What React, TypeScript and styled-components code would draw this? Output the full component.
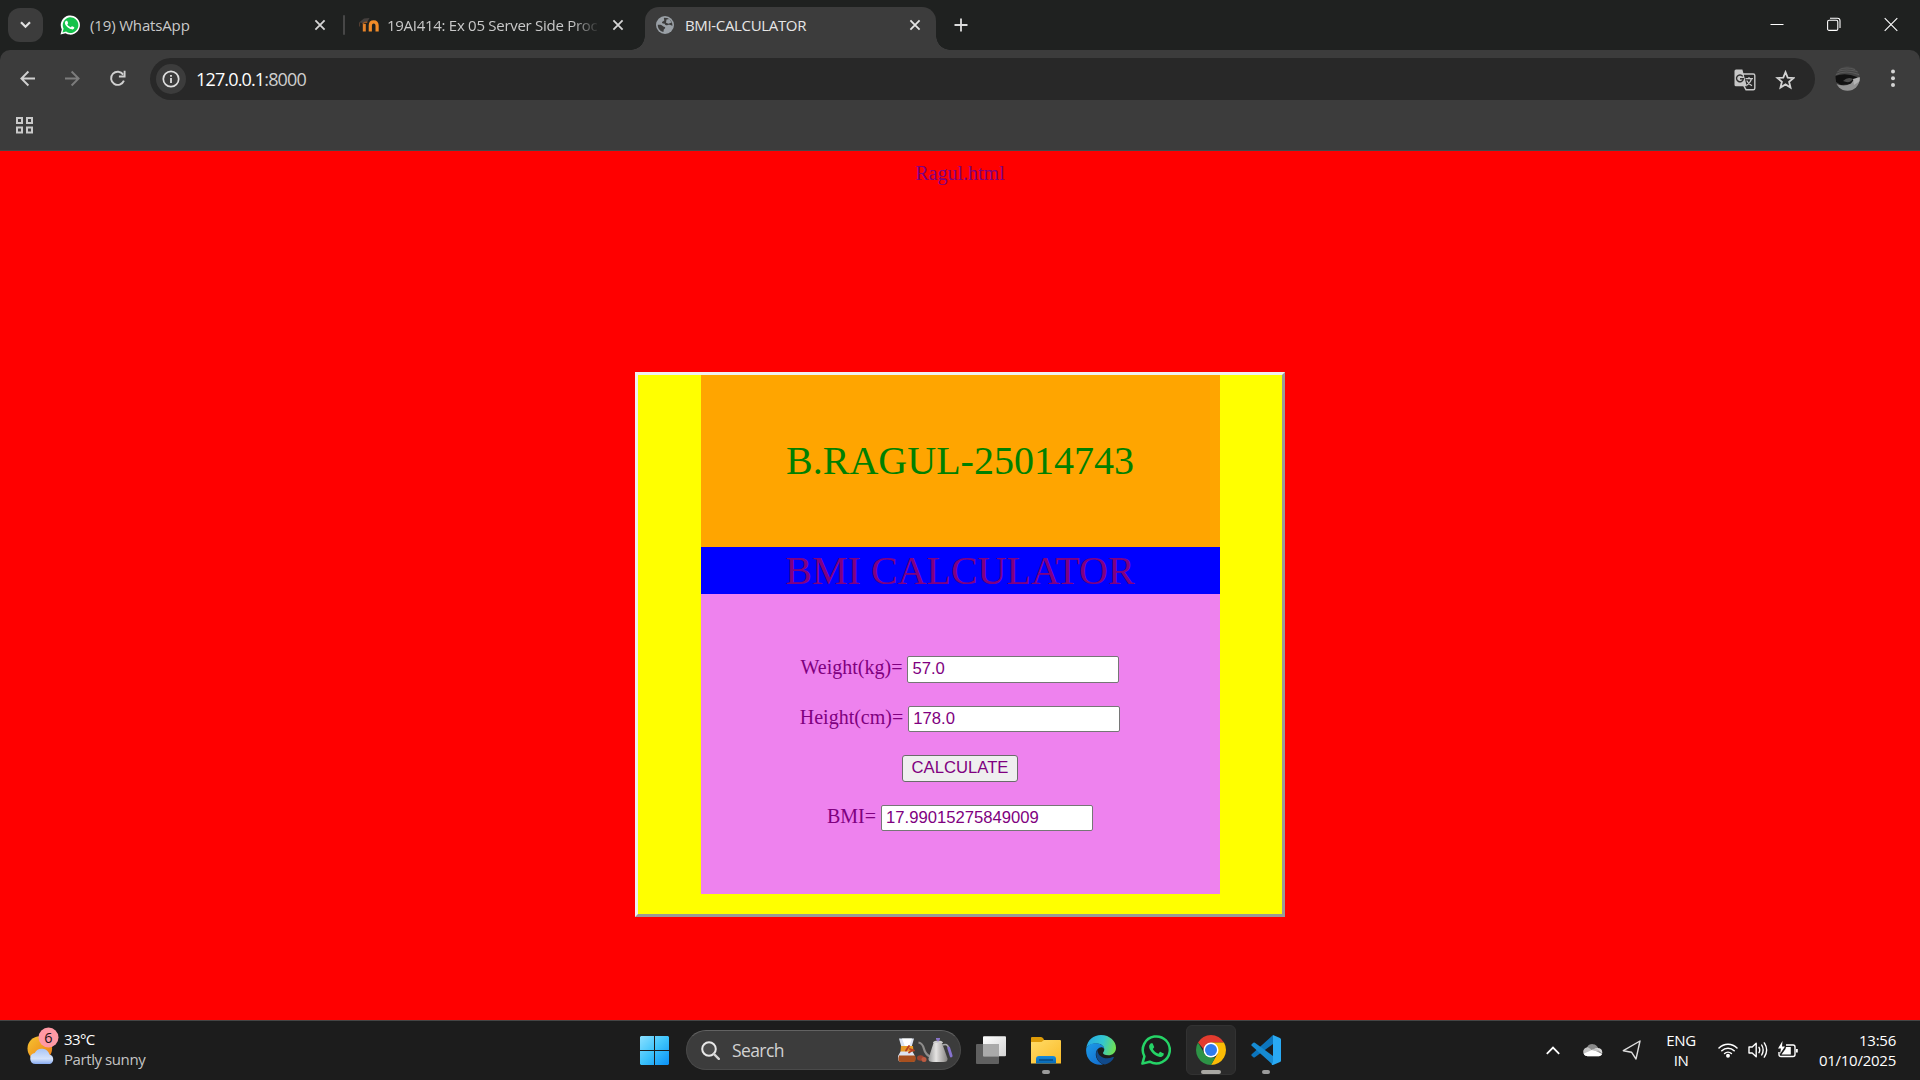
import React from "react";
import styled, { createGlobalStyle } from "styled-components";

const Global = createGlobalStyle`
  html, body { margin: 0; padding: 0; background: #1f2120; overflow: hidden; }
  *, *::before, *::after { box-sizing: border-box; }
  svg { display: block; flex: none; }
`;

const ui = `"Open Sans", "Noto Sans", sans-serif`;
const serif = `"Liberation Serif", "Times New Roman", serif`;
const sans = `"Liberation Sans", Arial, sans-serif`;

const Screen = styled.div`
  width: 1920px;
  height: 1080px;
  display: flex;
  flex-direction: column;
  font-family: ${ui};
`;

const TabStrip = styled.div`
  height: 50px;
  display: flex;
  align-items: flex-start;
  background: #1f2120;
  padding-left: 8px;
`;
const TabSearch = styled.div`
  width: 35px;
  height: 34px;
  margin-top: 8px;
  border-radius: 12px;
  background: #3c3c3c;
  display: grid;
  place-items: center;
`;
const Tab = styled.div<{ $w: number; $pl: number; $pr: number; $active?: boolean }>`
  width: ${(p) => p.$w}px;
  height: 43px;
  margin-top: 7px;
  padding: 0 ${(p) => p.$pr}px 8px ${(p) => p.$pl}px;
  display: flex;
  align-items: center;
  position: relative;
  color: ${(p) => (p.$active ? "#e6e6e6" : "#c9c9c9")};
  background: ${(p) => (p.$active ? "#3c3c3c" : "transparent")};
  border-radius: 14px 14px 0 0;
  ${(p) =>
    p.$active &&
    `
    &::before, &::after {
      content: "";
      position: absolute;
      bottom: 0;
      width: 14px;
      height: 14px;
    }
    &::before { left: -14px; background: radial-gradient(circle at 0 0, transparent 13.5px, #3c3c3c 14px); }
    &::after { right: -14px; background: radial-gradient(circle at 100% 0, transparent 13.5px, #3c3c3c 14px); }
  `}
`;
const TabTitle = styled.div<{ $gap: number; $ls: number; $fade?: boolean }>`
  flex: 1;
  min-width: 0;
  margin-left: ${(p) => p.$gap}px;
  margin-right: 10px;
  white-space: nowrap;
  font-size: 15px;
  line-height: 22px;
  letter-spacing: ${(p) => p.$ls}px;
  ${(p) => p.$fade && "mask-image: linear-gradient(to right, #000 calc(100% - 30px), transparent calc(100% - 2px));"}
`;
const Divider = styled.div`
  width: 2px;
  height: 20px;
  margin: 15px 0 0 0;
  border-radius: 1px;
  background: #474747;
`;
const NewTab = styled.div`
  margin: 18px 0 0 18px;
`;
const WindowButtons = styled.div`
  margin: 17px 22px 0 auto;
  display: flex;
  gap: 43px;
`;

const Toolbar = styled.div`
  height: 101px;
  background: linear-gradient(#1f2120, #1f2120) top / 100% 10px no-repeat, #3c3c3c;
`;
const ToolbarBody = styled.div`
  height: 101px;
  background: #3c3c3c;
  border-bottom: 1px solid #484848;
  border-radius: 10px 10px 0 0;
`;
const NavRow = styled.div`
  height: 58px;
  padding: 8px 0 8px 19px;
  display: flex;
  align-items: center;
`;
const NavIcon = styled.div`
  width: 45px;
  height: 40px;
  padding-bottom: 1px;
  display: flex;
  align-items: center;
`;
const Omnibox = styled.div`
  width: 1665px;
  height: 42px;
  margin-left: -4px;
  border-radius: 21px;
  background: #282828;
  display: flex;
  align-items: center;
  padding: 0 20px 0 6px;
`;
const SiteInfo = styled.div`
  width: 30px;
  height: 30px;
  border-radius: 50%;
  background: #3c3c3c;
  display: grid;
  place-items: center;
`;
const Url = styled.div`
  flex: 1;
  margin-left: 10px;
  font-size: 18px;
  line-height: 26px;
  letter-spacing: -0.85px;
  color: #fff;
  span { color: #cfcfcf; }
`;
const OmniIcons = styled.div`
  display: flex;
  align-items: center;
  gap: 19px;
  padding-top: 1px;
`;
const Profile = styled.div`
  width: 105px;
  padding: 0 22px 2px 20px;
  display: flex;
  align-items: center;
  justify-content: space-between;
`;
const BookmarkRow = styled.div`
  height: 42px;
  padding: 8px 0 0 15px;
`;

const Page = styled.main`
  height: 869px;
  background: #ff0000;
  color: purple;
  font-family: ${serif};
  display: flex;
  flex-direction: column;
  align-items: center;
  padding-top: 11px;
`;
const FileName = styled.div`
  font-size: 20px;
  line-height: 23px;
  height: 23px;
`;
const Card = styled.section`
  width: 650px;
  height: 545px;
  margin-top: 187px;
  background: #ffff00;
  border: 3px solid;
  border-color: #f0f0f0 #999 #999 #f0f0f0;
  display: flex;
  flex-direction: column;
  align-items: center;
`;
const Owner = styled.div`
  width: 519px;
  height: 172px;
  background: #ffa500;
  color: green;
  font-size: 40px;
  line-height: 46px;
  text-align: center;
  padding-top: 63px;
`;
const Heading = styled.div`
  width: 519px;
  height: 47px;
  background: #0000ff;
  font-size: 40px;
  line-height: 47px;
  text-align: center;
`;
const Form = styled.div`
  width: 519px;
  height: 300px;
  background: #ee82ee;
  padding-top: 62px;
`;
const Row = styled.div<{ $h: number }>`
  height: ${(p) => p.$h}px;
  display: flex;
  justify-content: center;
  gap: 5px;
  font-size: 20px;
  line-height: 23px;
`;
const Field = styled.input<{ $tall?: boolean }>`
  width: 212px;
  height: ${(p) => (p.$tall ? 27 : 26)}px;
  margin: 0;
  padding: 0 4px ${(p) => (p.$tall ? 2 : 0)}px;
  border: 1px solid #767676;
  border-radius: 2px;
  background: #fff;
  color: purple;
  font: 16.67px ${sans};
  outline: none;
`;
const Calculate = styled.button`
  width: 116px;
  height: 27px;
  padding: 0 0 2px;
  border: 1px solid #6b6b6b;
  border-radius: 3px;
  background: #efefef;
  color: purple;
  font: 16.67px ${sans};
`;

const Taskbar = styled.footer`
  height: 60px;
  background: #1c1c1c;
  border-top: 1px solid #454545;
  display: grid;
  grid-template-columns: 640px 1fr 374px;
  color: #fff;
`;
const Weather = styled.div`
  display: flex;
  padding: 6px 0 0 27px;
`;
const WeatherText = styled.div`
  margin: 2px 0 0 4px;
  font-size: 15px;
  line-height: 20px;
  letter-spacing: -0.6px;
  div + div { color: #c4c4c4; letter-spacing: -0.42px; }
`;
const Apps = styled.div`
  display: flex;
  align-items: center;
  padding-bottom: 1px;
`;
const SearchBox = styled.div`
  width: 275px;
  height: 40px;
  margin: 0 5px 0 17px;
  padding: 0 7px 0 14px;
  border-radius: 20px;
  background: #3c3c3c;
  border: 1px solid #4a4a4a;
  border-top-color: #626262;
  display: flex;
  align-items: center;
`;
const SearchText = styled.div`
  flex: 1;
  margin-left: 12px;
  font-size: 17.5px;
  line-height: 24px;
  letter-spacing: -0.6px;
  color: #d2d2d2;
`;
const AppTile = styled.div<{ $active?: boolean; $run?: boolean }>`
  width: 50px;
  height: 50px;
  margin-right: 5px;
  border-radius: 6px;
  display: grid;
  place-items: center;
  position: relative;
  background: ${(p) => (p.$active ? "#2a2a2a" : "transparent")};
  border: 1px solid ${(p) => (p.$active ? "#323232" : "transparent")};
  &::after {
    content: "";
    display: ${(p) => (p.$run ? "block" : "none")};
    position: absolute;
    bottom: 0;
    left: 50%;
    transform: translateX(-50%);
    width: ${(p) => (p.$active ? 20 : 8)}px;
    height: 4px;
    border-radius: 2px;
    background: ${(p) => (p.$active ? "#a9a8a3" : "#9a9a9a")};
  }
`;
const Tray = styled.div`
  display: flex;
  align-items: center;
  padding-bottom: 1px;
`;
const Lang = styled.div`
  width: 40px;
  margin: 0 17px 0 19px;
  text-align: center;
  font-size: 15px;
  line-height: 20px;
  letter-spacing: -0.4px;
`;
const Status = styled.div`
  display: flex;
  align-items: center;
  gap: 10px;
`;
const Clock = styled.div`
  flex: 1;
  padding-right: 24px;
  text-align: right;
  font-size: 15px;
  line-height: 20px;
  letter-spacing: -0.25px;
`;
const Spacer = styled.div<{ $w: number }>`
  flex: none;
  width: ${(p) => p.$w}px;
`;

const CloseX = ({ c = "#d5d5d5" }: { c?: string }) => (
  <svg width="12" height="12" viewBox="0 0 12 12" stroke={c} strokeWidth="1.8">
    <path d="M1.4 1.4l9.2 9.2M10.6 1.4L1.4 10.6" />
  </svg>
);

const phone =
  "M7.4 5.9c-.3-.6-.5-.6-.8-.6h-.7c-.3 0-.7.1-1 .5-.4.4-1.3 1.2-1.3 3s1.3 3.5 1.5 3.8c.2.2 2.5 4 6.2 5.4 3 1.2 3.7.9 4.3.9.7-.1 2.1-.9 2.4-1.700.3-.8.3-1.5.2-1.7-.1-.1-.3-.2-.7-.4s-2.1-1-2.4-1.2c-.3-.1-.6-.2-.8.2s-.9 1.2-1.1 1.4c-.2.2-.4.3-.8.1s-1.5-.6-2.9-1.8c-1.1-.9-1.8-2.1-2-2.5-.2-.4 0-.5.2-.7l.5-.6c.2-.2.2-.4.4-.6.1-.2 0-.5 0-.6z";

const WhatsTab = () => (
  <svg width="20" height="20" viewBox="0 0 24 24">
    <path d="M.6 23.4l1.6-6A11.5 11.5 0 1 1 6.600 22z" fill="#fff" />
    <path d="M3 21l1.3-4.500A9.400 9.400 0 1 1 7.300 19.900z" fill="#14c24b" />
    <g transform="translate(3.1 2.7) scale(.77)"><path d={phone} fill="#fff" /></g>
  </svg>
);
const WhatsTask = () => (
  <svg width="30" height="30" viewBox="0 0 30 30">
    <path d="M1.4 28.6l2-7.300A13.500 13.500 0 1 1 8.700 26.700z" fill="none" stroke="#25d366" strokeWidth="2.5" strokeLinejoin="round" />
    <g transform="translate(4.5 3)"><path d={phone} fill="#25d366" /></g>
  </svg>
);
const Moodle = () => (
  <svg width="22" height="16" viewBox="0 0 22 16">
    <path d="M1 5.5l5-4 5.5-.5-2 3.800-5 1.200z" fill="#45403e" />
    <path d="M1.6 5.5v4" stroke="#5a4032" />
    <path d="M6.3 14.5V7" stroke="#e5832a" strokeWidth="3" />
    <path d="M4.8 7q1-2 4.5-1.800" stroke="#9c5a25" strokeWidth="1.5" fill="none" />
    <path d="M12.3 14.5V8.500q0-3.600 3.400-3.600t3.400 3.600v6" fill="none" stroke="#f28c28" strokeWidth="3.2" />
  </svg>
);
const Globe = () => (
  <svg width="18" height="18" viewBox="0 0 18 18">
    <circle cx="9" cy="9" r="9" fill="#9aa0a6" />
    <path d="M8.200 1.700C7 3 9.600 4 7.300 5.200 5.200 6 6 7.400 7.600 7.600c2 .2 1 1.600 2.600 1.700 1.500.1 2.200-.9 3.500-.6 1.200.2 2 .6 2.600 1.300A7.300 7.300 0 0 0 11.300 2.100zM1.700 8.800c2 .1 3.900-.2 5 1.100.7 1.200 2.100.5 2.500 1.500.2 1.300-1.300 1.300-1.500 2.400-.1.800.1 1.600-.5 2.200A7.300 7.300 0 0 1 1.700 8.800z" fill="#3c3c3c" />
    <path d="M10.500 3.500l3-.5 2 3.500-3 1.200-2.500-1z" fill="#9aa0a6" />
  </svg>
);
const Arrow = ({ flip, c }: { flip?: boolean; c: string }) => (
  <svg width="17" height="17" viewBox="0 0 17 17" fill="none" stroke={c} strokeWidth="1.9">
    <g transform={flip ? "translate(17 0) scale(-1 1)" : undefined}>
      <path d="M16 8.500H2.700M9.400 1.500l-7 7 7 7" />
    </g>
  </svg>
);
const Reload = () => (
  <svg width="17" height="17" viewBox="0 0 17 17" fill="none" stroke="#d0d0d0" strokeWidth="1.9">
    <path d="M14.900 10.600a6.600 6.600 0 1 1-.7-6" />
    <path d="M15.600.8v5.700H9.900" />
  </svg>
);
const Info = () => (
  <svg width="18" height="18" viewBox="0 0 18 18">
    <circle cx="9" cy="9" r="7.7" fill="none" stroke="#dedede" strokeWidth="1.7" />
    <path d="M9 8v5M9 5v1.800" stroke="#dedede" strokeWidth="1.8" />
  </svg>
);
const Translate = () => (
  <svg width="22" height="22" viewBox="0 0 22 22">
    <path d="M9 5h10.300a1.500 1.500 0 0 1 1.500 1.500v12.700a1.500 1.500 0 0 1-1.500 1.500H12L10 17z" fill="#282828" stroke="#c7c7c7" strokeWidth="1.4" />
    <path d="M2 .5h6.400l4.400 16.700H2A1.500 1.500 0 0 1 .5 15.700V2A1.500 1.500 0 0 1 2 .5z" fill="#c7c7c7" />
    <path d="M8.700 7.400a3.400 3.400 0 1 0 .6 2.400H6" fill="none" stroke="#303030" strokeWidth="1.4" />
    <path d="M11.500 9.700H19M15 8v1.700M17.500 9.700c-.6 3-2.500 5-5 6.700M12.700 11.500c1 2.500 3 4 5.300 5.300" fill="none" stroke="#c7c7c7" strokeWidth="1.2" />
  </svg>
);
const Star = () => (
  <svg width="20" height="20" viewBox="0 0 20 20">
    <path d="M10.500 2.200l2.200 5.400 5.900.4-4.500 3.800 1.400 5.700-5-3.100-5 3.100 1.400-5.700L2.400 8l5.900-.4z" fill="none" stroke="#d2d2d2" strokeWidth="1.8" />
  </svg>
);
const Avatar = () => (
  <svg width="25" height="25" viewBox="0 0 25 25">
    <defs>
      <clipPath id="face"><circle cx="12.5" cy="12.5" r="12.2" /></clipPath>
    </defs>
    <g clipPath="url(#face)">
      <rect width="25" height="25" fill="#444" />
      <path d="M0 9q10-6 25 0M1 6q10-4 23 0M4 3.500q8-3 16 0" stroke="#5a5a5a" strokeWidth="1.2" fill="none" />
      <path d="M0 10q11-4 22 1l-3 7-13 1-5-3z" fill="#111" />
      <path d="M8 15q5-5 10-2-3 5-10 2z" fill="#4a4a4a" />
      <path d="M0 17.500q9 4 16 0 3-5 9-6v14H0z" fill="#939393" />
      <path d="M18 13l7-2v4l-6 4z" fill="#b4b4b4" />
    </g>
  </svg>
);

const SunCloud = () => (
  <svg width="33" height="38" viewBox="0 0 33 38">
    <defs>
      <linearGradient id="sun" x1="0" y1="0" x2="1" y2="1">
        <stop offset="0" stopColor="#f5c431" /><stop offset="1" stopColor="#ee7a14" />
      </linearGradient>
      <linearGradient id="cloud" x1="0" y1="0" x2="0" y2="1">
        <stop offset="0" stopColor="#a9c5f5" /><stop offset=".65" stopColor="#d5e3fb" /><stop offset="1" stopColor="#86aaf0" />
      </linearGradient>
    </defs>
    <circle cx="12.8" cy="21.500" r="12.300" fill="url(#sun)" />
    <path d="M8.500 37a5.500 5.500 0 0 1-.8-10.900A8 8 0 0 1 22.500 27.500a5 5 0 0 1 .5 9.500z" fill="url(#cloud)" />
    <circle cx="21.500" cy="10.500" r="10" fill="#ff99a4" />
    <text x="21.300" y="15.800" textAnchor="middle" fontFamily="Open Sans, sans-serif" fontSize="14.500" fill="#201014">6</text>
  </svg>
);
const Windows = () => (
  <svg width="29" height="29" viewBox="0 0 29 29">
    <defs>
      <linearGradient id="win" x1="0" y1="0" x2="29" y2="29" gradientUnits="userSpaceOnUse">
        <stop offset="0" stopColor="#8be0ff" /><stop offset=".5" stopColor="#3dc3fb" /><stop offset="1" stopColor="#0a90f5" />
      </linearGradient>
    </defs>
    <path d="M1 0h13v14H0V1zM15 0h13l1 1v13H15zM0 15h14v14H1l-1-1zM15 15h14v13l-1 1H15z" fill="url(#win)" />
  </svg>
);
const SearchIcon = () => (
  <svg width="19" height="19" viewBox="0 0 19 19" fill="none">
    <circle cx="8" cy="8" r="6.800" fill="#4b4b4b" stroke="#e8e8e8" strokeWidth="2" />
    <path d="M12.800 12.800l5 5" stroke="#d4d4d4" strokeWidth="2.400" strokeLinecap="round" />
  </svg>
);
const Coffee = () => (
  <svg width="55" height="25" viewBox="0 0 55 25">
    <defs>
      <linearGradient id="kettle"><stop offset="0" stopColor="#999" /><stop offset=".4" stopColor="#e5e3e2" /><stop offset="1" stopColor="#858280" /></linearGradient>
    </defs>
    <path d="M1 .5h15l-3 10.500 4 7q1 6-3 6H3q-4 0-3-6l4-7z" fill="#dce3f1" />
    <path d="M4 .5l3 8h4l3-8z" fill="#fff" />
    <path d="M3 8h12l.5 5.500h-13z" fill="#e69a28" />
    <path d="M1 17.500h16q2 6.500-2 6.500H3q-4 0-2-6.500z" fill="#a8501f" />
    <path d="M11 8l-3 4.500M12 11l4 1.500M11 14.500l3-2" stroke="#b93d22" strokeWidth="1.800" strokeLinecap="round" />
    <ellipse cx="22.500" cy="20" rx="3.500" ry="2.800" fill="#9d4330" /><ellipse cx="26" cy="21.500" rx="2.500" ry="2.500" fill="#bd5b41" />
    <path d="M20.500 4.500q4 .5 5.500 6.500t7 8" fill="none" stroke="#8e8c8b" strokeWidth="2.200" />
    <path d="M35.500 5h8.500l5.500 15.500q.5 3.500-4 3.500H35q-5 0-4.500-3.500z" fill="url(#kettle)" />
    <path d="M35 5q0-2.500 5-2.500t5 2.500z" fill="#ccc" />
    <path d="M38 .8h4M40 .8v2.500" stroke="#8a75c9" strokeWidth="1.800" />
    <path d="M44.500 7q5-2 6.200 3" fill="none" stroke="#aaa" strokeWidth="1.600" />
    <path d="M50.700 10l2.500 8" stroke="#8773cf" strokeWidth="2.800" strokeLinecap="round" />
  </svg>
);
const TaskView = () => (
  <svg width="30" height="30" viewBox="0 0 30 30">
    <defs>
      <linearGradient id="tv" x1="0" y1="0" x2="1" y2="1"><stop offset="0" stopColor="#fff" /><stop offset="1" stopColor="#d3d3d3" /></linearGradient>
    </defs>
    <rect y="9" width="23" height="20" rx="1" fill="#606060" />
    <rect x="7" y="1.300" width="23" height="20" rx="1" fill="url(#tv)" />
    <path d="M7 9h16v12.300H7z" fill="#aaa" />
  </svg>
);
const Folder = () => (
  <svg width="30" height="30" viewBox="0 0 30 30">
    <defs>
      <linearGradient id="fold" x1="0" y1="0" x2="1" y2="1"><stop offset="0" stopColor="#ffdb68" /><stop offset="1" stopColor="#fabb27" /></linearGradient>
      <linearGradient id="dock" x1="0" y1="0" x2="0" y2="1"><stop offset="0" stopColor="#168bdc" /><stop offset="1" stopColor="#0868b3" /></linearGradient>
    </defs>
    <path d="M0 3q0-1 1-1h9q1.500 0 2.300 1.500l1 2V12H0z" fill="#dd9b08" />
    <path d="M0 7h10.500l2.500-2h16q1 0 1 1v22.500H0z" fill="url(#fold)" />
    <path d="M5 28.500V24q0-3 3-3h14q3 0 3 3v4.500z" fill="url(#dock)" />
    <path d="M8 25h14" stroke="#043e72" strokeWidth="1.200" />
  </svg>
);
const Edge = () => (
  <svg width="30" height="30" viewBox="0 0 30 30">
    <defs>
      <linearGradient id="e1" x1="0" y1=".3" x2="1" y2=".5"><stop offset="0" stopColor="#25a9e5" /><stop offset=".55" stopColor="#33c6cf" /><stop offset="1" stopColor="#70e052" /></linearGradient>
      <linearGradient id="e2" x1="0" y1="0" x2=".7" y2="1"><stop offset="0" stopColor="#1c9be8" /><stop offset="1" stopColor="#1470d0" /></linearGradient>
    </defs>
    <path d="M.3 13C1.500 5 7.500 0 15 0c9 0 15 6.500 15 12.700 0 4.800-3.500 7.600-7.700 7.600-3.700 0-5.300-1.400-5.300-2.300 0-.8 1.300-1.400 1.300-3.500 0-3-3-6-7.600-6C6 8.500 2 10 .3 13z" fill="url(#e1)" />
    <path d="M.3 13C2 9.500 6 8 10.300 8.300c4.700.2 7.700 3 8 5.700-1.400-2-3.300-2.200-5-1.200-5.800 3.500-4.300 13 3.700 16.700C8 31.600-1.300 24.500.3 13z" fill="url(#e2)" />
    <path d="M11.300 14.500c-3.500 6 1.500 14.700 7.700 14.900 4-1 7.500-3.600 8.800-6.700.3-.8-.2-1-1-.6-6.800 3-15 .5-15.500-7.600z" fill="#114a8b" />
  </svg>
);
const Chrome = () => (
  <svg width="30" height="30" viewBox="0 0 30 30">
    <path d="M2.010 7.500A15 15 0 0 1 27.990 7.500H15v7.500H8.500z" fill="#e33b2e" />
    <path d="M15 7.500h12.990A15 15 0 0 1 15 30l6.500-11.250z" fill="#fbbc05" />
    <path d="M2.010 7.500l6.500 11.250L15 22.500h4.330L15 30A15 15 0 0 1 2.010 7.500z" fill="#2d9346" />
    <circle cx="15" cy="15" r="7.500" fill="#fff" /><circle cx="15" cy="15" r="6" fill="#2f7bee" />
  </svg>
);
const VSCode = () => (
  <svg width="30" height="30" viewBox="0 0 30 30">
    <path d="M22 0L.7 19.200q-.8.800 0 1.600l1.600 1.500q.8.600 1.600 0L22 9z" fill="#0c75bd" />
    <path d="M22 30L.7 10.800q-.8-.8 0-1.600l1.600-1.500q.8-.6 1.600 0L22 21z" fill="#168bd2" />
    <path d="M22 0l7 3q1 .5 1 1.600v20.800q0 1.100-1 1.600l-7 3q-1 .1-1.300-.6L22 27z" fill="#29a9f3" />
  </svg>
);

const Chevron = () => (
  <svg width="14" height="9" viewBox="0 0 14 9" fill="none" stroke="#fff" strokeWidth="1.800"><path d="M.8 7.800L7 1.600l6.200 6.200" /></svg>
);
const OneDrive = () => (
  <svg width="20" height="14" viewBox="0 0 20 14">
    <defs>
      <clipPath id="puff"><path d="M4.500 13.300A4.500 4.500 0 0 1 4 4.400 6.200 6.200 0 0 1 15.300 5.200a4.100 4.100 0 0 1 .7 8.100z" /></clipPath>
    </defs>
    <g clipPath="url(#puff)">
      <rect width="20" height="14" fill="#8a8a8a" />
      <path d="M0 3.500q6 0 9 3.800L2 14H0z" fill="#c4c4c4" />
      <path d="M12 5h8v6z" fill="#d8d8d8" />
      <path d="M0 11l10-4.500 10 5V14H0z" fill="#fff" />
      <path d="M9 7.300l4-2.500 3 4z" fill="#c4c4c4" />
    </g>
  </svg>
);
const Locate = () => (
  <svg width="20" height="20" viewBox="0 0 20 20" fill="none" stroke="#ddd" strokeWidth="1.400" strokeLinejoin="round"><path d="M18 1L1.300 10.700l8.200 1.500L14 19z" /></svg>
);
const Wifi = () => (
  <svg width="20" height="16" viewBox="0 0 20 16" fill="none" stroke="#fff" strokeWidth="1.500" strokeLinecap="round">
    <path d="M1 6a12.700 12.700 0 0 1 18 0M3.800 8.800a8.800 8.800 0 0 1 12.400 0M6.600 11.500a4.900 4.900 0 0 1 6.800 0" /><circle cx="10" cy="13.800" r="1.200" fill="#fff" />
  </svg>
);
const Speaker = () => (
  <svg width="20" height="18" viewBox="0 0 20 18" fill="none" stroke="#fff" strokeWidth="1.400" strokeLinecap="round" strokeLinejoin="round">
    <path d="M1 6v6h3.200l4 3.700V2.300L4.200 6zM11 6.300q1.500 2.700 0 5.400M13.700 4q2.900 5 0 10M16.300 1.900q4.700 7.100 0 14.200" />
  </svg>
);
const Battery = () => (
  <svg width="20" height="18" viewBox="0 0 20 18">
    <path d="M8 4h7q2 0 2 2v7.500q0 2-2 2H3q-2 0-2-2V11" fill="none" stroke="#fff" strokeWidth="1.400" />
    <path d="M8 6h4.800v7.500H3.500l4-5.500zM18 8h1.800v3.500H18z" fill="#fff" />
    <path d="M4.500 0L0 7.500h3L2 13l5-7.500H4z" fill="#fff" />
  </svg>
);

export default function App() {
  return (
    <Screen>
      <Global />
      <TabStrip>
        <TabSearch>
          <svg width="11" height="8" viewBox="0 0 11 8" fill="none" stroke="#e0e0e0" strokeWidth="2.200"><path d="M1 1.200l4.500 4.600L10 1.200" /></svg>
        </TabSearch>
        <Tab $w={300} $pl={17} $pr={17}>
          <WhatsTab />
          <TabTitle $gap={10} $ls={-0.15}>(19) WhatsApp</TabTitle>
          <CloseX />
        </Tab>
        <Divider />
        <Tab $w={300} $pl={13} $pr={21}>
          <Moodle />
          <TabTitle $gap={7} $ls={-0.28} $fade>19AI414: Ex 05 Server Side Proc</TabTitle>
          <CloseX />
        </Tab>
        <Tab $w={291} $pl={11} $pr={15} $active>
          <Globe />
          <TabTitle $gap={11} $ls={-0.34}>BMI-CALCULATOR</TabTitle>
          <CloseX c="#e6e6e6" />
        </Tab>
        <NewTab>
          <svg width="14" height="14" viewBox="0 0 14 14" stroke="#dcdcdc" strokeWidth="1.800"><path d="M7 .5v13M.5 7h13" /></svg>
        </NewTab>
        <WindowButtons>
          <svg width="14" height="15" viewBox="0 0 14 15"><path d="M.5 7.500h13" stroke="#fff" /></svg>
          <svg width="14" height="15" viewBox="0 0 14 15" fill="none" stroke="#fff" strokeWidth="1.100"><rect x=".6" y="3.200" width="10.200" height="10.200" rx="1.500" /><path d="M3 1.200h7.500q2.500 0 2.500 2.500V11" /></svg>
          <svg width="14" height="15" viewBox="0 0 14 15" stroke="#fff" strokeWidth="1.100"><path d="M.7 1.200l12.600 12.600M13.300 1.200L.7 13.800" /></svg>
        </WindowButtons>
      </TabStrip>

      <Toolbar>
        <ToolbarBody>
          <NavRow>
            <NavIcon><Arrow c="#d0d0d0" /></NavIcon>
            <NavIcon><Arrow flip c="#7c7c7c" /></NavIcon>
            <NavIcon><Reload /></NavIcon>
            <Omnibox>
              <SiteInfo><Info /></SiteInfo>
              <Url>127.0.0.1<span>:8000</span></Url>
              <OmniIcons><Translate /><Star /></OmniIcons>
            </Omnibox>
            <Profile>
              <Avatar />
              <svg width="10" height="20" viewBox="0 0 10 20" fill="#d4d4d4"><circle cx="5" cy="3.500" r="2" /><circle cx="5" cy="10.300" r="2" /><circle cx="5" cy="17.100" r="2" /></svg>
            </Profile>
          </NavRow>
          <BookmarkRow>
            <svg width="19" height="19" viewBox="0 0 19 19" fill="none" stroke="#c9c9c9" strokeWidth="2"><path d="M2 2h5v5H2zM12 2h5v5h-5zM2 11.500h5v5H2zM12 11.500h5v5h-5z" /></svg>
          </BookmarkRow>
        </ToolbarBody>
      </Toolbar>

      <Page>
        <FileName>Ragul.html</FileName>
        <Card>
          <Owner>B.RAGUL-25014743</Owner>
          <Heading>BMI CALCULATOR</Heading>
          <Form>
            <Row $h={50}>Weight(kg)=<Field $tall defaultValue="57.0" /></Row>
            <Row $h={49}>Height(cm)=<Field defaultValue="178.0" /></Row>
            <Row $h={50}><Calculate>CALCULATE</Calculate></Row>
            <Row $h={50}>BMI=<Field defaultValue="17.99015275849009" /></Row>
          </Form>
        </Card>
      </Page>

      <Taskbar>
        <Weather>
          <SunCloud />
          <WeatherText><div>33°C</div><div>Partly sunny</div></WeatherText>
        </Weather>
        <Apps>
          <Windows />
          <SearchBox><SearchIcon /><SearchText>Search</SearchText><Coffee /></SearchBox>
          <AppTile><TaskView /></AppTile>
          <AppTile $run><Folder /></AppTile>
          <AppTile><Edge /></AppTile>
          <AppTile><WhatsTask /></AppTile>
          <AppTile $active $run><Chrome /></AppTile>
          <AppTile $run><VSCode /></AppTile>
        </Apps>
        <Tray>
          <Chevron />
          <Spacer $w={23} />
          <OneDrive />
          <Spacer $w={19} />
          <Locate />
          <Lang>ENG<br />IN</Lang>
          <Status><Wifi /><Speaker /><Battery /></Status>
          <Clock>13:56<br />01/10/2025</Clock>
        </Tray>
      </Taskbar>
    </Screen>
  );
}
